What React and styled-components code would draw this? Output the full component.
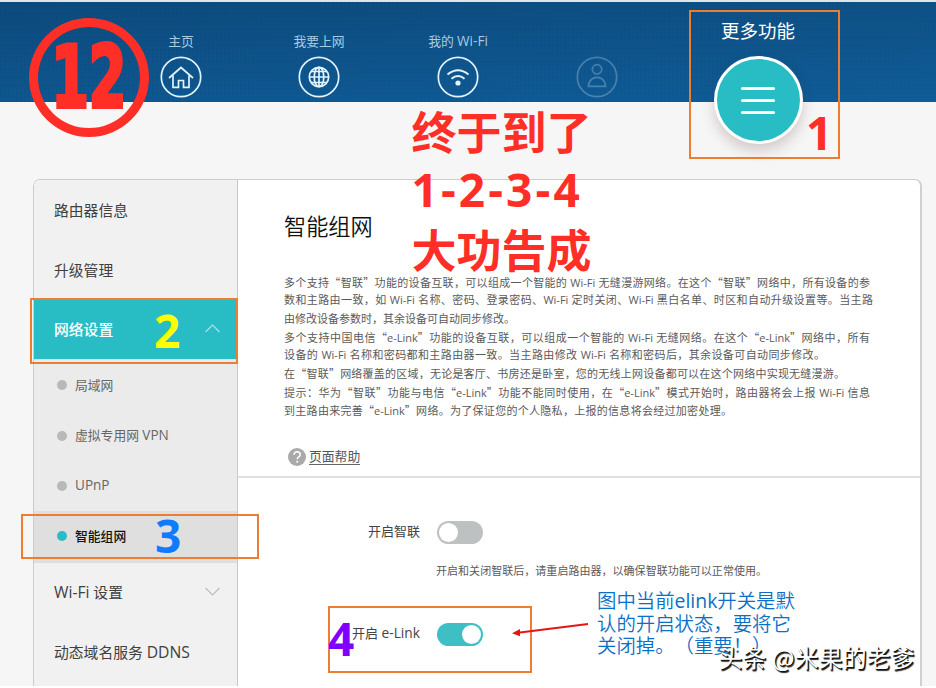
import React from "react";
import styled, { createGlobalStyle } from "styled-components";

const cjk = `"Open Sans", "Noto Sans CJK SC", sans-serif`;

const Global = createGlobalStyle`
  * { box-sizing: border-box; }
  html, body { margin: 0; background: #fff; overflow: hidden; }
  body { font-family: ${cjk}; color: #333; }
`;

const Page = styled.div`
  position: relative;
  width: 936px;
  height: 688px;
  overflow: hidden;
  background: #f6f6f6;
  border-top: 2px solid #dfe6ea;
  border-bottom: 2px solid #fff;
`;

const Header = styled.header`
  height: 100px;
  display: grid;
  grid-template-columns: 112px 138px 138px 140px 138px 184px 86px;
  background:
    repeating-linear-gradient(0deg, rgba(0, 30, 60, 0.04) 0 1px, transparent 1px 4px),
    repeating-linear-gradient(90deg, rgba(0, 30, 60, 0.04) 0 1px, transparent 1px 4px),
    linear-gradient(100deg, rgba(8, 50, 90, 0.1), rgba(20, 105, 170, 0.14)),
    linear-gradient(#0d4d80, #0f5b96);
`;

const NavItem = styled.div`
  grid-column: ${(p) => p.$col};
  display: flex;
  flex-direction: column;
  align-items: center;
  padding-top: ${(p) => (p.$main ? 17 : 28.5)}px;
`;

const NavLabel = styled.span`
  height: ${(p) => (p.$main ? 37 : 25)}px;
  line-height: ${(p) => (p.$main ? 23 : 20)}px;
  font-size: ${(p) => (p.$main ? 18.5 : 12.8)}px;
  color: ${(p) => (p.$main ? "#fff" : "#a9cbe0")};
  white-space: nowrap;
`;

const Latin = styled.span`
  font-size: 1.06em;
`;

const NavIcon = styled.svg`
  width: 42px;
  height: 42px;
  flex: none;
  fill: none;
  stroke: #e2f3fc;
  stroke-width: 1.7;
  opacity: ${(p) => (p.$dim ? 0.27 : 1)};
`;

const MenuButton = styled.div`
  width: 89px;
  height: 88px;
  flex: none;
  border: 3px solid #fff;
  border-radius: 50%;
  background: #28bdc5;
  box-shadow: 0 7px 13px rgba(90, 50, 50, 0.22);
  display: flex;
  flex-direction: column;
  align-items: center;
  justify-content: center;
  gap: 9px;
`;

const MenuBar = styled.i`
  width: 34px;
  height: 3px;
  border-radius: 2px;
  background: #fff;
`;

const Panel = styled.main`
  margin: 77px 14px 0 33px;
  height: 507px;
  display: grid;
  grid-template-columns: 204px 1fr;
  border: 1px solid #ccc;
  border-right: 2px solid #d0d0d0;
  border-bottom: 0;
  border-radius: 7px 7px 0 0;
  background: #fff;
  overflow: hidden;
`;

const Sidebar = styled.nav`
  background: #f1f1f1;
  border-right: 1px solid #c8c8c8;
`;

const MenuRow = styled.div`
  height: ${(p) => p.$h || 60}px;
  padding: 0 17px 2px 20px;
  display: flex;
  align-items: center;
  justify-content: space-between;
  font-size: 14.8px;
  color: ${(p) => (p.$active ? "#fff" : "#404040")};
  font-weight: ${(p) => (p.$active ? 500 : 400)};
  background: ${(p) => (p.$active ? "#28bdc5" : "transparent")};
`;

const Chevron = styled.svg`
  width: 15px;
  height: 9px;
  fill: none;
  stroke: ${(p) => (p.$light ? "#a5e4e6" : "#bcbcbc")};
  stroke-width: 1.2;
`;

const SubMenu = styled.div`
  background: #ebebeb;
  border-top: 1px solid #ddd;
  border-bottom: 1px solid #ddd;
`;

const SubRow = styled.div`
  height: 50.4px;
  padding-left: 23px;
  display: flex;
  align-items: center;
  gap: 9px;
  font-size: 12.8px;
  font-weight: ${(p) => (p.$active ? 500 : 400)};
  color: ${(p) => (p.$active ? "#111" : "#666")};
  background: ${(p) => (p.$active ? "#dfdfdf" : "transparent")};
`;

const SubText = styled.span`
  padding-bottom: 2px;
`;

const Dot = styled.i`
  width: 10px;
  height: 10px;
  margin-right: -1px;
  border-radius: 50%;
  background: ${(p) => (p.$active ? "#28bdc5" : "#b9b9b9")};
`;

const Intro = styled.section`
  height: 298px;
  padding: 32px 0 0 46px;
  border-bottom: 2px solid #e0e0e0;
`;

const Title = styled.h1`
  margin: 0;
  height: 61px;
  line-height: 30px;
  font-size: 22.2px;
  font-weight: 350;
  color: #111;
`;

const Line = styled.div`
  width: ${(p) => p.$w}px;
  height: 18.3px;
  line-height: 18.3px;
  font-size: 11px;
  color: #5a5a5a;
  white-space: nowrap;
  text-align: justify;
  text-align-last: justify;
`;

const Quote = styled.span`
  font-family: "Noto Sans CJK SC", sans-serif;
`;

const Help = styled.div`
  display: flex;
  align-items: center;
  gap: 3px;
  margin: 27px 0 0 4px;
  height: 22px;
  font-size: 12.8px;
  color: #555;
`;

const HelpIcon = styled.svg`
  width: 18px;
  height: 18px;
`;

const HelpLink = styled.span`
  line-height: 15px;
  border-bottom: 1px solid #666;
`;

const Settings = styled.section`
  padding-top: 42px;
`;

const Field = styled.div`
  display: flex;
  align-items: center;
  height: 24px;
  gap: 17px;
  font-size: 13px;
  color: #444;
`;

const FieldLabel = styled.span`
  width: 182px;
  padding-bottom: 3px;
  text-align: right;
`;

const Switch = styled.div`
  width: 46px;
  height: 23px;
  padding: 2px;
  border-radius: 12px;
  display: flex;
  justify-content: ${(p) => (p.$on ? "flex-end" : "flex-start")};
  background: ${(p) => (p.$on ? "#3dbfc3" : "#bec1c1")};
`;

const Knob = styled.i`
  width: 19px;
  height: 19px;
  border-radius: 50%;
  background: #fff;
`;

const Hint = styled.div`
  margin-left: 198px;
  padding-top: 17.5px;
  height: 78px;
`;

const Marker = styled.div`
  position: absolute;
  left: ${(p) => p.$x}px;
  top: ${(p) => p.$y - 2}px;
  width: ${(p) => p.$w}px;
  height: ${(p) => p.$h}px;
  border: 2px solid #ed7d31;
`;

const Digit = styled.div`
  position: absolute;
  left: ${(p) => p.$x}px;
  top: ${(p) => p.$y - 2}px;
  font: 700 46px/46px "Open Sans", sans-serif;
  color: ${(p) => p.$c};
`;

const Ring = styled.div`
  position: absolute;
  left: 29px;
  top: 16px;
  width: 120px;
  height: 119px;
  border: 9px solid #ff2f27;
  border-radius: 50%;
  display: flex;
  align-items: center;
  justify-content: center;
`;

const RingText = styled.span`
  font: 700 86px/92px "DejaVu Sans", sans-serif;
  color: #ff2f27;
  -webkit-text-stroke: 4px #ff2f27;
  transform: translateY(-1px) scaleX(0.63);
`;

const Headline = styled.div`
  position: absolute;
  left: 411.5px;
  top: 99px;
  font: 700 45px/59px "Noto Sans CJK SC", sans-serif;
  color: #ff2f27;
  white-space: nowrap;
`;

const HeadlineDigits = styled.div`
  font-family: "Open Sans", sans-serif;
  font-size: 46px;
  letter-spacing: 3.1px;
`;

const Note = styled.div`
  position: absolute;
  left: 597px;
  top: 588px;
  font: 400 19.4px/22.5px "Open Sans", "Noto Sans CJK SC", sans-serif;
  text-spacing-trim: space-all;
  color: #0b70c5;
  white-space: nowrap;
`;

const NoteLine = styled.div`
  font-weight: 350;
`;

const NoteLatin = styled.span`
  font-weight: 400;
`;

const Arrow = styled.svg`
  position: absolute;
  left: 510px;
  top: 618px;
  width: 80px;
  height: 20px;
`;

const Watermark = styled.div`
  position: absolute;
  left: 718.5px;
  top: 640px;
  font: 400 23.8px/30px "Noto Sans CJK SC", sans-serif;
  color: #fff;
  text-shadow: 1px 1px 0 #111, 1.5px 1.5px 1px #222;
  white-space: nowrap;
  letter-spacing: 0.2px;
`;

const lines = [
  [586, "多个支持“智联”功能的设备互联，可以组成一个智能的 Wi-Fi 无缝漫游网络。在这个“智联”网络中，所有设备的参"],
  [589, "数和主路由一致，如 Wi-Fi 名称、密码、登录密码、Wi-Fi 定时关闭、Wi-Fi 黑白名单、时区和自动升级设置等。当主路"],
  [231, "由修改设备参数时，其余设备可自动同步修改。"],
  [586, "多个支持中国电信“e-Link”功能的设备互联，可以组成一个智能的 Wi-Fi 无缝网络。在这个“e-Link”网络中，所有"],
  [541, "设备的 Wi-Fi 名称和密码都和主路由器一致。当主路由修改 Wi-Fi 名称和密码后，其余设备可自动同步修改。"],
  [561, "在“智联”网络覆盖的区域，无论是客厅、书房还是卧室，您的无线上网设备都可以在这个网络中实现无缝漫游。"],
  [586, "提示：华为“智联”功能与电信“e-Link”功能不能同时使用，在“e-Link”模式开始时，路由器将会上报 Wi-Fi 信息"],
  [448, "到主路由来完善“e-Link”网络。为了保证您的个人隐私，上报的信息将会经过加密处理。"],
];

const withQuotes = (text) =>
  text.split(/([“”])/).map((part, i) => (/[“”]/.test(part) ? <Quote key={i}>{part}</Quote> : part));

export default function App() {
  return (
    <Page>
      <Global />
      <Header>
        <NavItem $col={2}>
          <NavLabel>主页</NavLabel>
          <NavIcon viewBox="0 0 42 42">
            <circle cx="21" cy="21" r="19.7" />
            <path d="M9 22 21 11.5 33 22M13 19.5V31.3H18.5V24.5H23.5V31.3H29V19.5" />
          </NavIcon>
        </NavItem>
        <NavItem $col={3}>
          <NavLabel>我要上网</NavLabel>
          <NavIcon viewBox="0 0 42 42">
            <circle cx="21" cy="21" r="19.7" />
            <circle cx="21" cy="21" r="9.7" />
            <ellipse cx="21" cy="21" rx="4.8" ry="9.7" />
            <path d="M21 11V31M11 21H31M13 15.5H29M13 26.5H29" />
          </NavIcon>
        </NavItem>
        <NavItem $col={4}>
          <NavLabel>我的 <Latin>Wi-Fi</Latin></NavLabel>
          <NavIcon viewBox="0 0 42 42">
            <circle cx="21" cy="21" r="19.7" />
            <path strokeWidth="2" d="M10.5 18.5Q21 10 31.5 18.5M14.5 22.7Q21 17.3 27.5 22.7" />
            <circle cx="21" cy="27" r="2.6" fill="#e2f3fc" stroke="none" />
          </NavIcon>
        </NavItem>
        <NavItem $col={5}>
          <NavLabel />
          <NavIcon $dim viewBox="0 0 42 42">
            <circle cx="21" cy="21" r="19.7" />
            <circle cx="21" cy="13.3" r="4.7" />
            <path d="M12.5 30.3C12.5 18.5 29.5 18.5 29.5 30.3Z" />
          </NavIcon>
        </NavItem>
        <NavItem $col={6} $main>
          <NavLabel $main>更多功能</NavLabel>
          <MenuButton>
            <MenuBar />
            <MenuBar />
            <MenuBar />
          </MenuButton>
        </NavItem>
      </Header>

      <Panel>
        <Sidebar>
          <MenuRow>路由器信息</MenuRow>
          <MenuRow>升级管理</MenuRow>
          <MenuRow $active $h={59}>
            网络设置
            <Chevron $light viewBox="0 0 15 9"><path d="M.5 8 7.5 1 14.5 8" /></Chevron>
          </MenuRow>
          <SubMenu>
            <SubRow><Dot /><SubText>局域网</SubText></SubRow>
            <SubRow><Dot /><SubText>虚拟专用网 <Latin>VPN</Latin></SubText></SubRow>
            <SubRow><Dot /><SubText><Latin>UPnP</Latin></SubText></SubRow>
            <SubRow $active><Dot $active /><SubText>智能组网</SubText></SubRow>
          </SubMenu>
          <MenuRow>
            <span><Latin>Wi-Fi</Latin> 设置</span>
            <Chevron viewBox="0 0 15 9"><path d="M.5 1 7.5 8 14.5 1" /></Chevron>
          </MenuRow>
          <MenuRow><span>动态域名服务 <Latin>DDNS</Latin></span></MenuRow>
        </Sidebar>
        <div>
          <Intro>
            <Title>智能组网</Title>
            {lines.map(([w, text]) => (
              <Line key={text} $w={w}>{withQuotes(text)}</Line>
            ))}
            <Help>
              <HelpIcon viewBox="0 0 18 18">
                <circle cx="9" cy="9" r="9" fill="#aaa" />
                <path d="M6 6.8C6 2.8 12.2 3 12.2 6.7 12.2 9 9.2 8.8 9.2 11.3" fill="none" stroke="#fff" strokeWidth="1.5" />
                <circle cx="9.2" cy="13.8" r="1" fill="#fff" />
              </HelpIcon>
              <HelpLink>页面帮助</HelpLink>
            </Help>
          </Intro>
          <Settings>
            <Field>
              <FieldLabel>开启智联</FieldLabel>
              <Switch><Knob /></Switch>
            </Field>
            <Hint>
              <Line $w={331}>开启和关闭智联后，请重启路由器，以确保智联功能可以正常使用。</Line>
            </Hint>
            <Field>
              <FieldLabel>开启 <Latin>e-Link</Latin></FieldLabel>
              <Switch $on><Knob /></Switch>
            </Field>
          </Settings>
        </div>
      </Panel>

      <Ring><RingText>12</RingText></Ring>
      <Headline>
        <div>终于到了</div>
        <HeadlineDigits>1-2-3-4</HeadlineDigits>
        <div>大功告成</div>
      </Headline>
      <Marker $x={689} $y={10} $w={151} $h={149} />
      <Marker $x={30} $y={298} $w={208} $h={66} />
      <Marker $x={21} $y={514} $w={238} $h={45} />
      <Marker $x={328} $y={606} $w={204} $h={67} />
      <Digit $x={806} $y={109} $c="#ff2f27">1</Digit>
      <Digit $x={154} $y={307} $c="#ffff00">2</Digit>
      <Digit $x={155} $y={512} $c="#0f7bff">3</Digit>
      <Digit $x={328} $y={615} $c="#7f00ff">4</Digit>
      <Arrow viewBox="0 0 80 20">
        <path d="M10 12.5 78 4" stroke="#e81313" strokeWidth="1.8" />
        <path d="M2 13.2 10 9V16.2Z" fill="#e81313" />
      </Arrow>
      <Note>
        <NoteLine>图中当前<NoteLatin>elink</NoteLatin>开关是默</NoteLine>
        <NoteLine>认的开启状态，要将它</NoteLine>
        <NoteLine>关闭掉。（重要！）</NoteLine>
      </Note>
      <Watermark>头条 @米果的老爹</Watermark>
    </Page>
  );
}
